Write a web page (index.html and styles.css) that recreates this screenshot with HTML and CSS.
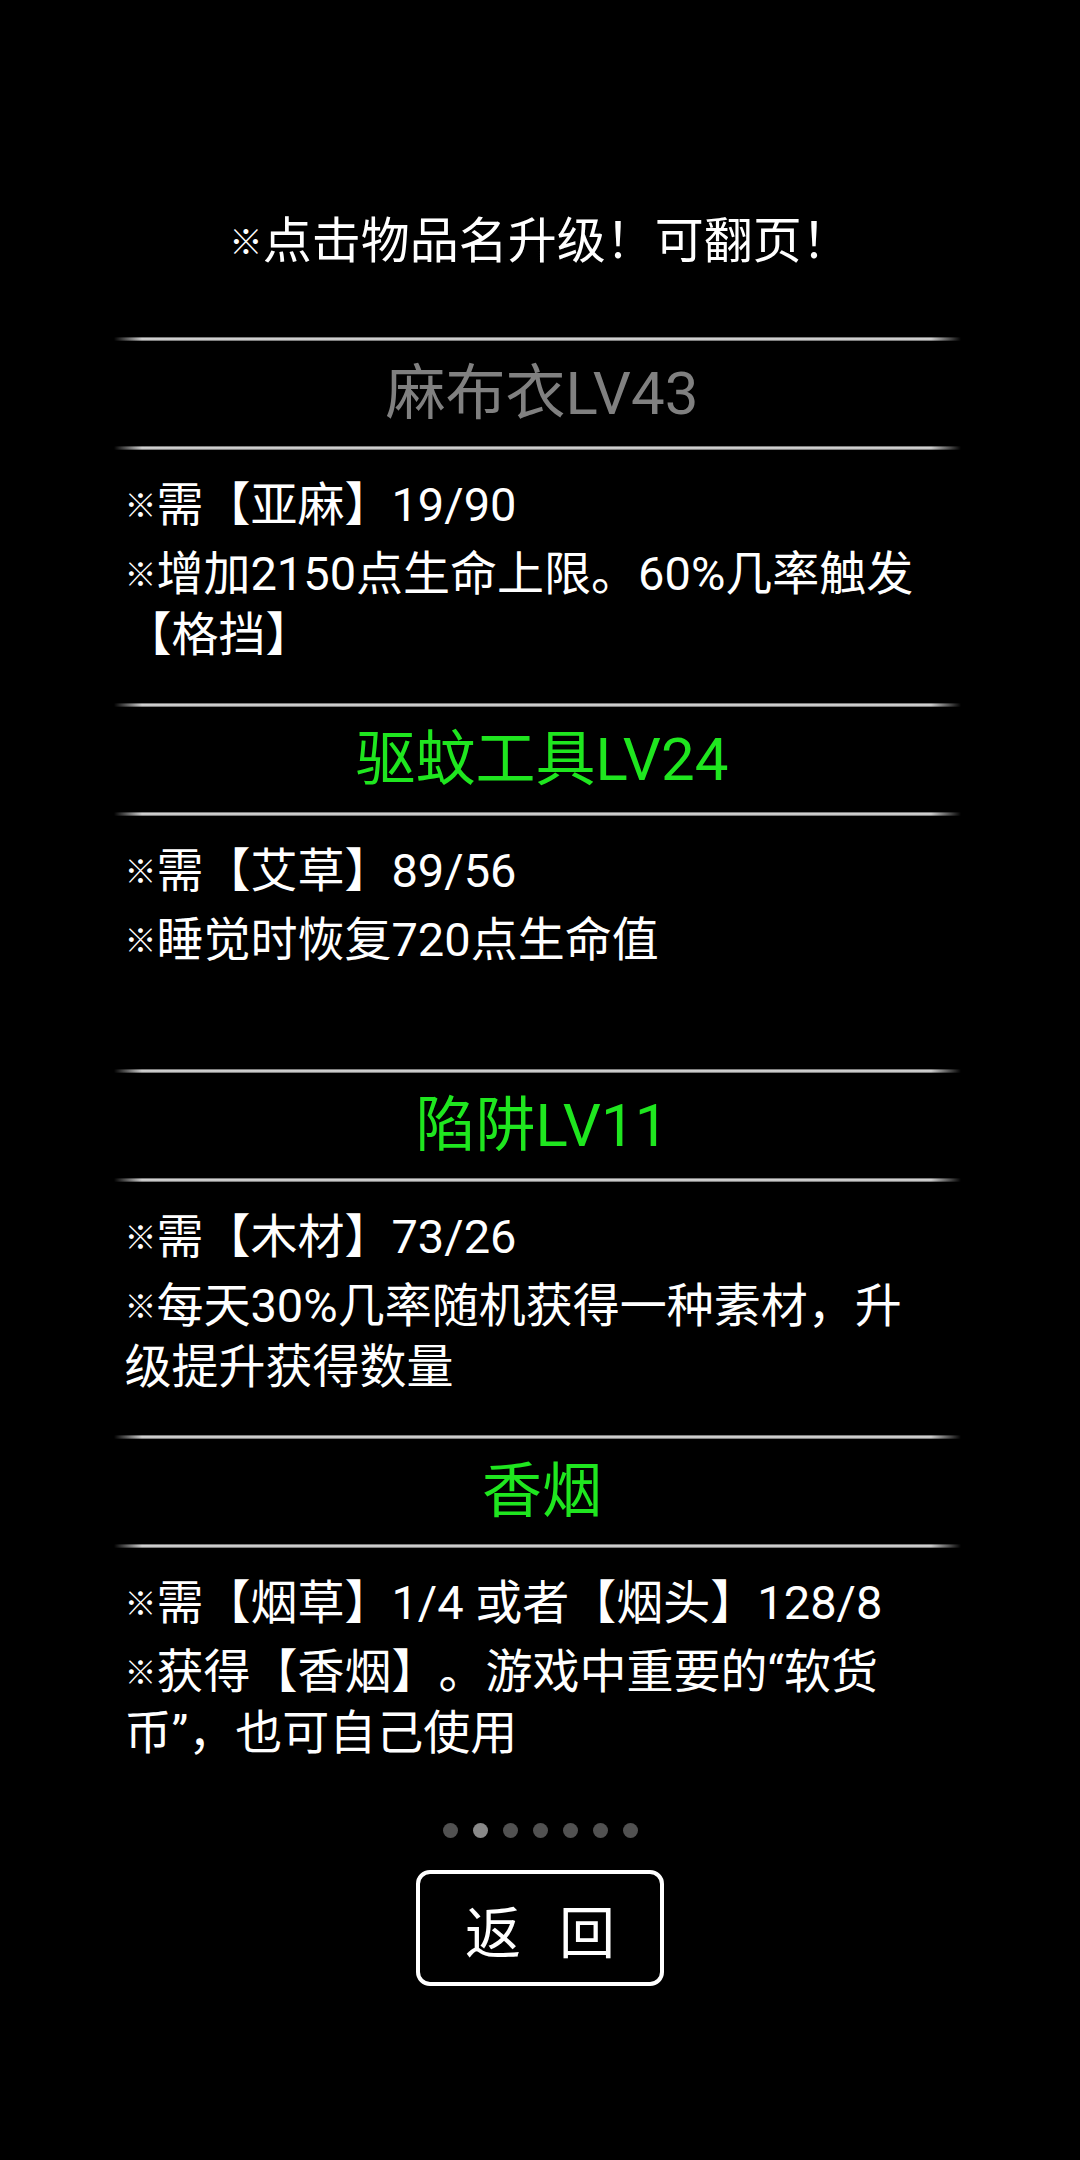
FILE: index.html
```html
<!DOCTYPE html>
<html lang="zh-CN">
<head>
<meta charset="utf-8">
<title>升级</title>
<link rel="stylesheet" href="styles.css">
</head>
<body>
<div class="page">
  <div class="hint"><span class="mk">※</span>点击物品名升级！可翻页！</div>

  <div class="item">
    <div class="band">
      <div class="rule"></div>
      <div class="title grey">麻布衣LV43</div>
      <div class="rule"></div>
    </div>
    <div class="body">
      <p><span class="mk">※</span>需【亚麻】19/90</p>
      <p><span class="mk">※</span>增加2150点生命上限。60%几率触发【格挡】</p>
    </div>
  </div>

  <div class="item">
    <div class="band">
      <div class="rule"></div>
      <div class="title green">驱蚊工具LV24</div>
      <div class="rule"></div>
    </div>
    <div class="body">
      <p><span class="mk">※</span>需【艾草】89/56</p>
      <p><span class="mk">※</span>睡觉时恢复720点生命值</p>
    </div>
  </div>

  <div class="item">
    <div class="band">
      <div class="rule"></div>
      <div class="title green">陷阱LV11</div>
      <div class="rule"></div>
    </div>
    <div class="body">
      <p><span class="mk">※</span>需【木材】73/26</p>
      <p><span class="mk">※</span>每天30%几率随机获得一种素材，升级提升获得数量</p>
    </div>
  </div>

  <div class="item">
    <div class="band">
      <div class="rule"></div>
      <div class="title green">香烟</div>
      <div class="rule"></div>
    </div>
    <div class="body">
      <p><span class="mk">※</span>需【烟草】1/4 或者【烟头】128/8</p>
      <p><span class="mk">※</span>获得【香烟】。游戏中重要的“软货币”，也可自己使用</p>
    </div>
  </div>

  <div class="dots">
    <span class="dot"></span>
    <span class="dot active"></span>
    <span class="dot"></span>
    <span class="dot"></span>
    <span class="dot"></span>
    <span class="dot"></span>
    <span class="dot"></span>
  </div>

  <div class="actions">
    <div class="back">返 回</div>
  </div>
</div>
</body>
</html>
```
FILE: styles.css
```css
html, body {
  margin: 0;
  padding: 0;
  background: #000;
}

body {
  width: 1080px;
  height: 2160px;
  overflow: hidden;
  font-family: Roboto, "Noto Sans CJK SC", sans-serif;
  color: #fff;
  text-spacing-trim: space-all;
}

.page {
  display: flex;
  flex-direction: column;
  align-items: center;
  padding-top: 212px;
}

.mk {
  font-family: "Noto Sans CJK SC", sans-serif;
  font-size: 0.68em;
  font-weight: 700;
  vertical-align: 0.13em;
  line-height: 1;
}

.hint {
  font-size: 49px;
  line-height: 60px;
  height: 60px;
  margin-bottom: 65px;
  text-align: center;
  width: 100%;
}

.item {
  width: 847px;
  height: 366px;
  display: flex;
  flex-direction: column;
  margin-left: -6px;
}

.band {
  display: flex;
  flex-direction: column;
}

.rule {
  height: 4px;
  background:
    linear-gradient(to right, rgba(0,0,0,1) 0, rgba(0,0,0,0) 28px, rgba(0,0,0,0) calc(100% - 30px), rgba(0,0,0,1) 100%),
    linear-gradient(to bottom, #555 0, #d8d8d8 40%, #cfcfcf 60%, #5a5a5a 100%);
}

.title {
  height: 105px;
  line-height: 105px;
  font-size: 60px;
  text-align: center;
  padding-left: 10px;
}

.grey {
  color: #808080;
}

.green {
  color: #1fe61f;
}

.body {
  padding: 24px 14px 0 11px;
  font-size: 47px;
  line-height: 61px;
}

.body p {
  margin: 0;
}

.body p + p {
  margin-top: 8px;
}

.dots {
  display: flex;
  gap: 15px;
  margin-top: 22px;
  height: 15px;
}

.dot {
  width: 15px;
  height: 15px;
  border-radius: 50%;
  background: #515151;
}

.dot.active {
  background: #898989;
}

.actions {
  margin-top: 32px;
  display: flex;
  justify-content: center;
}

.back {
  box-sizing: border-box;
  width: 248px;
  height: 116px;
  border: 4px solid #fff;
  border-radius: 14px;
  display: flex;
  align-items: center;
  justify-content: center;
  font-size: 56px;
  letter-spacing: 12px;
  padding-left: 12px;
  color: #fff;
}
```
